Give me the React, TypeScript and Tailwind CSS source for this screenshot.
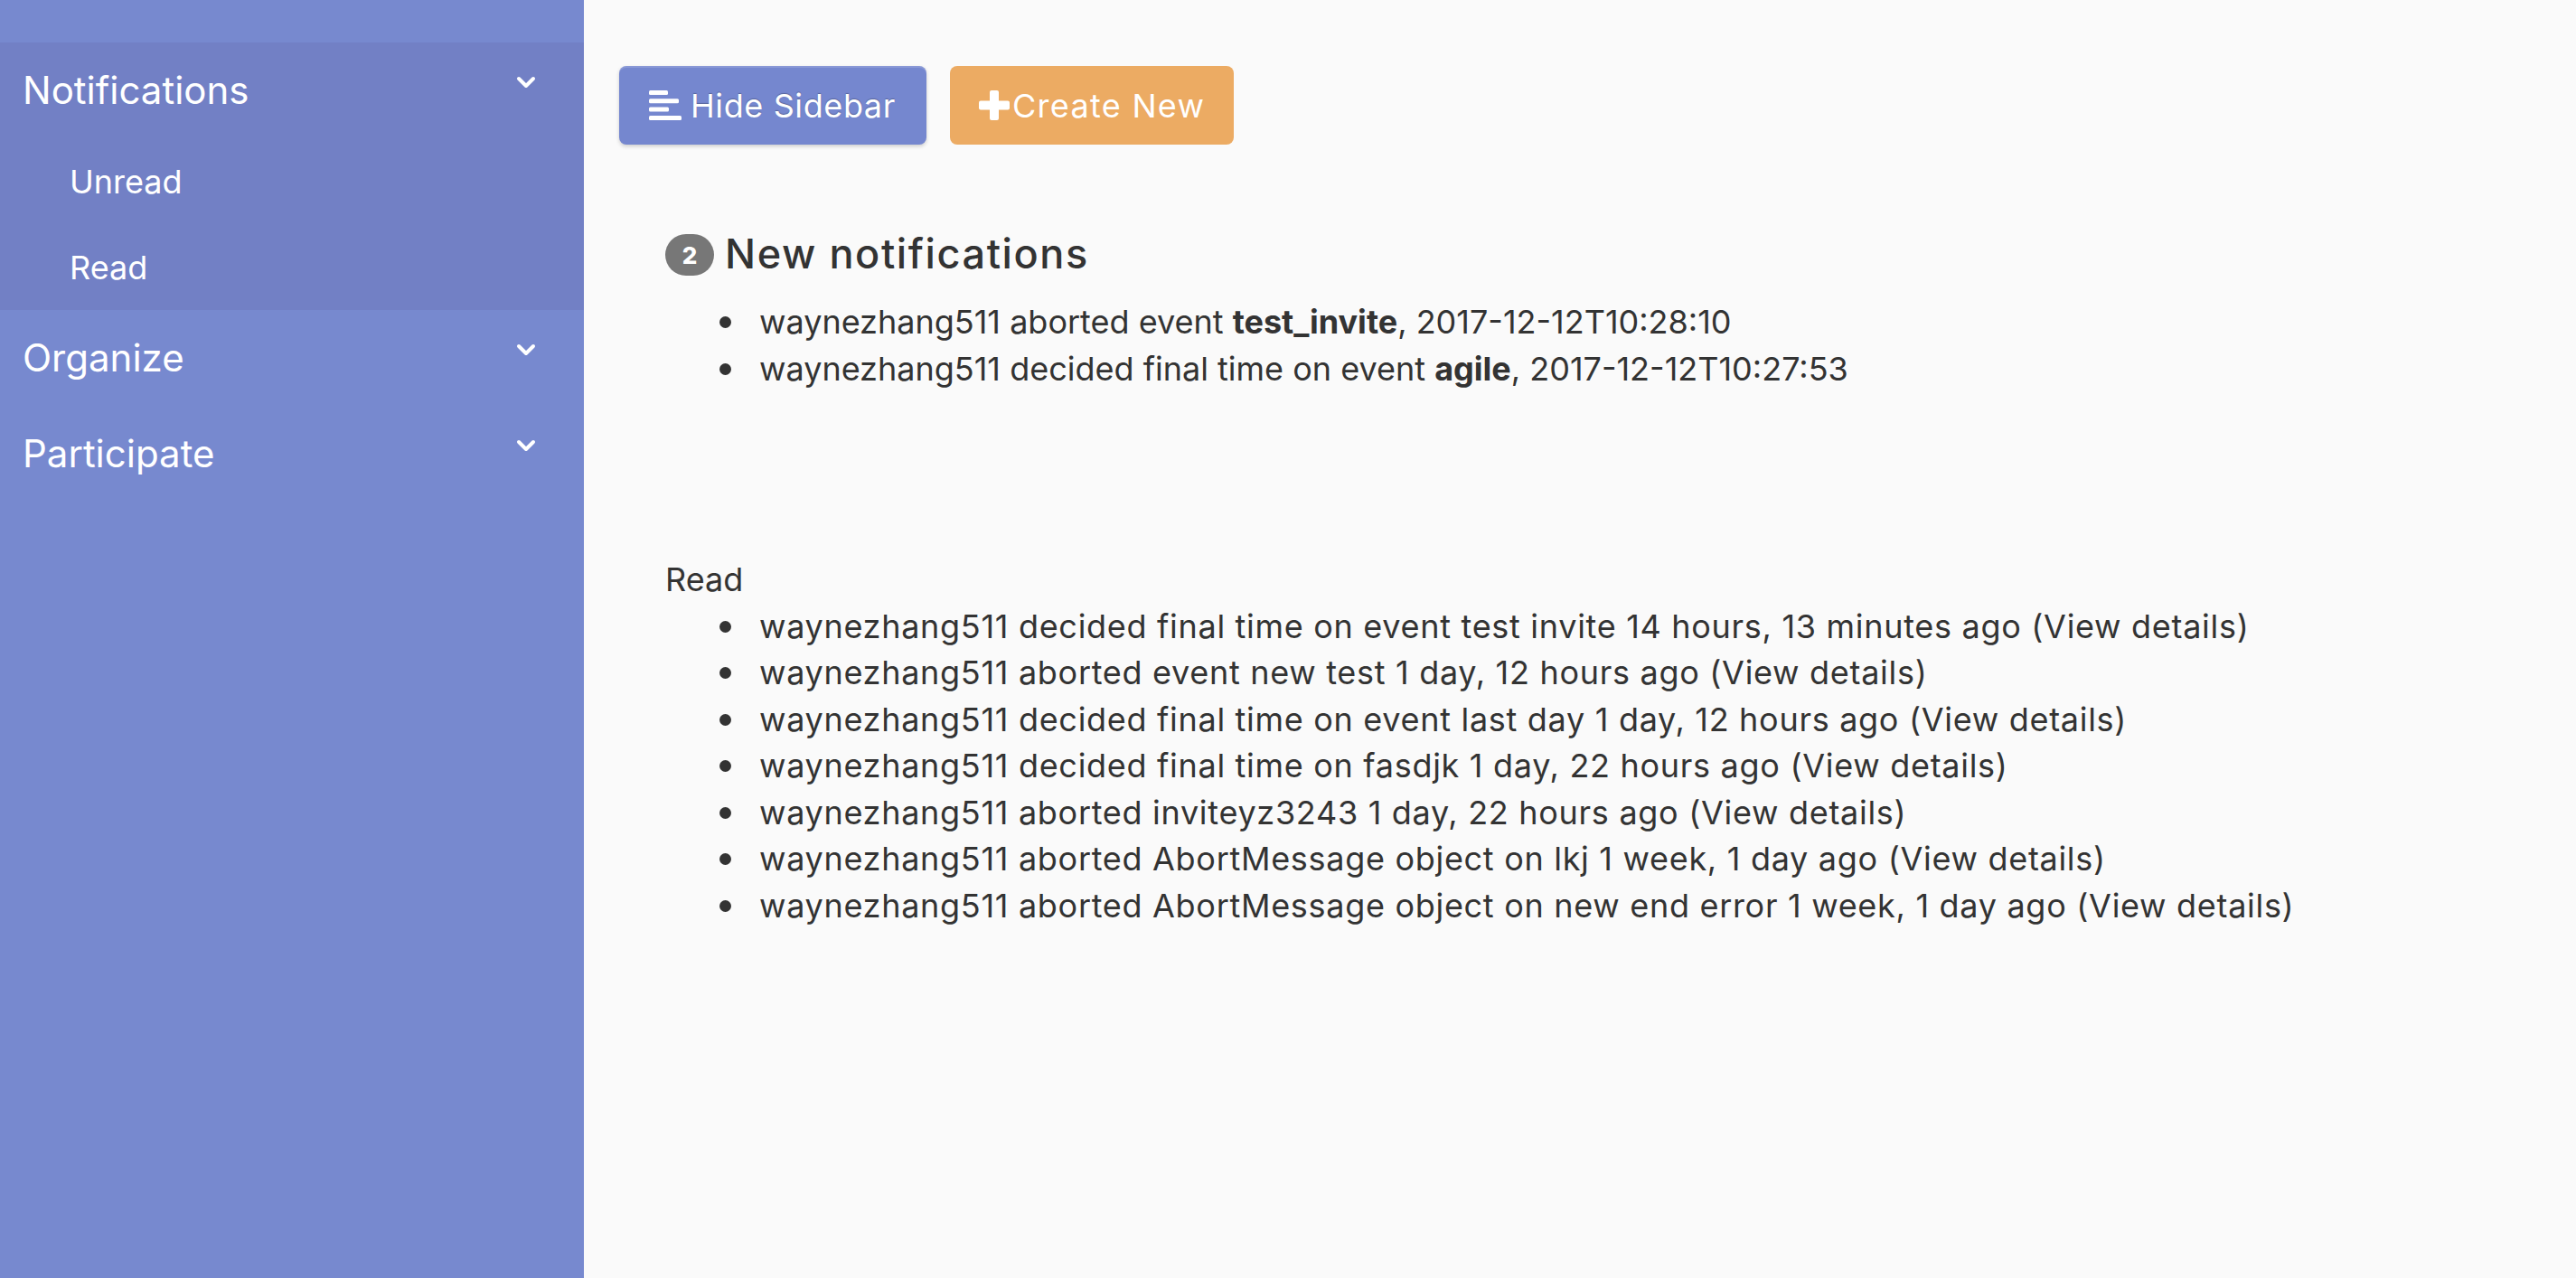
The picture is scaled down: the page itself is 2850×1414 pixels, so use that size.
const newItems = [
  { pre: "waynezhang511 aborted event ", bold: "test_invite", post: ", 2017-12-12T10:28:10" },
  { pre: "waynezhang511 decided final time on event ", bold: "agile", post: ", 2017-12-12T10:27:53" },
]

const readItems = [
  "waynezhang511 decided final time on event test invite 14 hours, 13 minutes ago",
  "waynezhang511 aborted event new test 1 day, 12 hours ago",
  "waynezhang511 decided final time on event last day 1 day, 12 hours ago",
  "waynezhang511 decided final time on fasdjk 1 day, 22 hours ago",
  "waynezhang511 aborted inviteyz3243 1 day, 22 hours ago",
  "waynezhang511 aborted AbortMessage object on lkj 1 week, 1 day ago",
  "waynezhang511 aborted AbortMessage object on new end error 1 week, 1 day ago",
]

function Chevron() {
  return (
    <svg width="22" height="14" viewBox="0 0 22 14" fill="none">
      <path d="M3 3 L11 11 L19 3" stroke="white" strokeWidth="4" strokeLinecap="round" strokeLinejoin="round" />
    </svg>
  )
}

function SideHead({ label }: { label: string }) {
  return (
    <div className="h-[106px] flex items-center justify-between pl-[25px] pr-[53px]">
      <span className="text-[42px] leading-none">{label}</span>
      <span className="-mt-[18px]">
        <Chevron />
      </span>
    </div>
  )
}

function Dot() {
  return <span className="shrink-0 w-[13px] h-[13px] rounded-full bg-[#333] mt-[19px] ml-[60px] mr-[31px]" />
}

export default function App() {
  return (
    <div
      className="flex w-full h-screen min-h-[1414px] bg-[#fafafa] text-[#333]"
      style={{ fontFamily: "Inter, 'Noto Sans', sans-serif" }}
    >
      <aside className="w-[646px] shrink-0 bg-[#7789cf] text-white">
        <div className="h-[47px]" />
        <div className="bg-[#7280c5] h-[296px]">
          <SideHead label="Notifications" />
          <div className="h-[95px] flex items-center pl-[77px] text-[36px]">Unread</div>
          <div className="h-[95px] flex items-center pl-[77px] text-[36px]">Read</div>
        </div>
        <SideHead label="Organize" />
        <SideHead label="Participate" />
      </aside>

      <main className="flex-1 pt-[73px]">
        <div className="flex gap-[26px] pl-[39px]">
          <button className="h-[87px] w-[340px] flex items-center pl-[33px] rounded-[8px] bg-[#7587cf] text-white text-[36px] tracking-[0.6px] shadow-[inset_0_2px_0_rgba(255,255,255,0.15),0_2px_4px_rgba(0,0,0,0.18)] [text-shadow:0_-1px_1px_rgba(0,0,0,0.25)]">
            <svg width="36" height="33" viewBox="0 0 36 33" className="mr-[10px]">
              <rect x="0" y="0" width="21" height="5" rx="1.5" fill="white" />
              <rect x="0" y="9.3" width="33" height="5" rx="1.5" fill="white" />
              <rect x="0" y="18.6" width="22" height="5" rx="1.5" fill="white" />
              <rect x="0" y="28" width="36" height="5" rx="1.5" fill="white" />
            </svg>
            Hide Sidebar
          </button>
          <button className="h-[87px] w-[314px] flex items-center pl-[32px] rounded-[8px] bg-[#ecab63] text-white text-[36px] tracking-[1.3px]">
            <svg width="34" height="33" viewBox="0 0 34 33" className="mr-[3px]">
              <rect x="12" y="0" width="10" height="33" rx="2" fill="white" />
              <rect x="0" y="11.5" width="34" height="10" rx="2" fill="white" />
            </svg>
            Create New
          </button>
        </div>

        <div className="pl-[90px]">
          <div className="mt-[94px] h-[52px] flex items-center">
            <span className="w-[54px] h-[46px] mt-[4px] rounded-full bg-[#777] text-white text-[26px] font-extrabold flex items-center justify-center">
              2
            </span>
            <h3 className="ml-[12px] text-[45px] leading-none font-medium tracking-[1.6px]">New notifications</h3>
          </div>

          <ul className="mt-[25px] text-[36px] leading-[51.5px]">
            {newItems.map((n) => (
              <li key={n.bold} className="flex">
                <Dot />
                <span>
                  {n.pre}
                  <b className="font-bold">{n.bold}</b>
                  {n.post}
                </span>
              </li>
            ))}
          </ul>

          <div className="mt-[182px] text-[36px] leading-[51.5px]">Read</div>
          <ul className="text-[36px] leading-[51.5px] tracking-[0.7px]">
            {readItems.map((t) => (
              <li key={t} className="flex">
                <Dot />
                <span>{t} (View details)</span>
              </li>
            ))}
          </ul>
        </div>
      </main>
    </div>
  )
}
